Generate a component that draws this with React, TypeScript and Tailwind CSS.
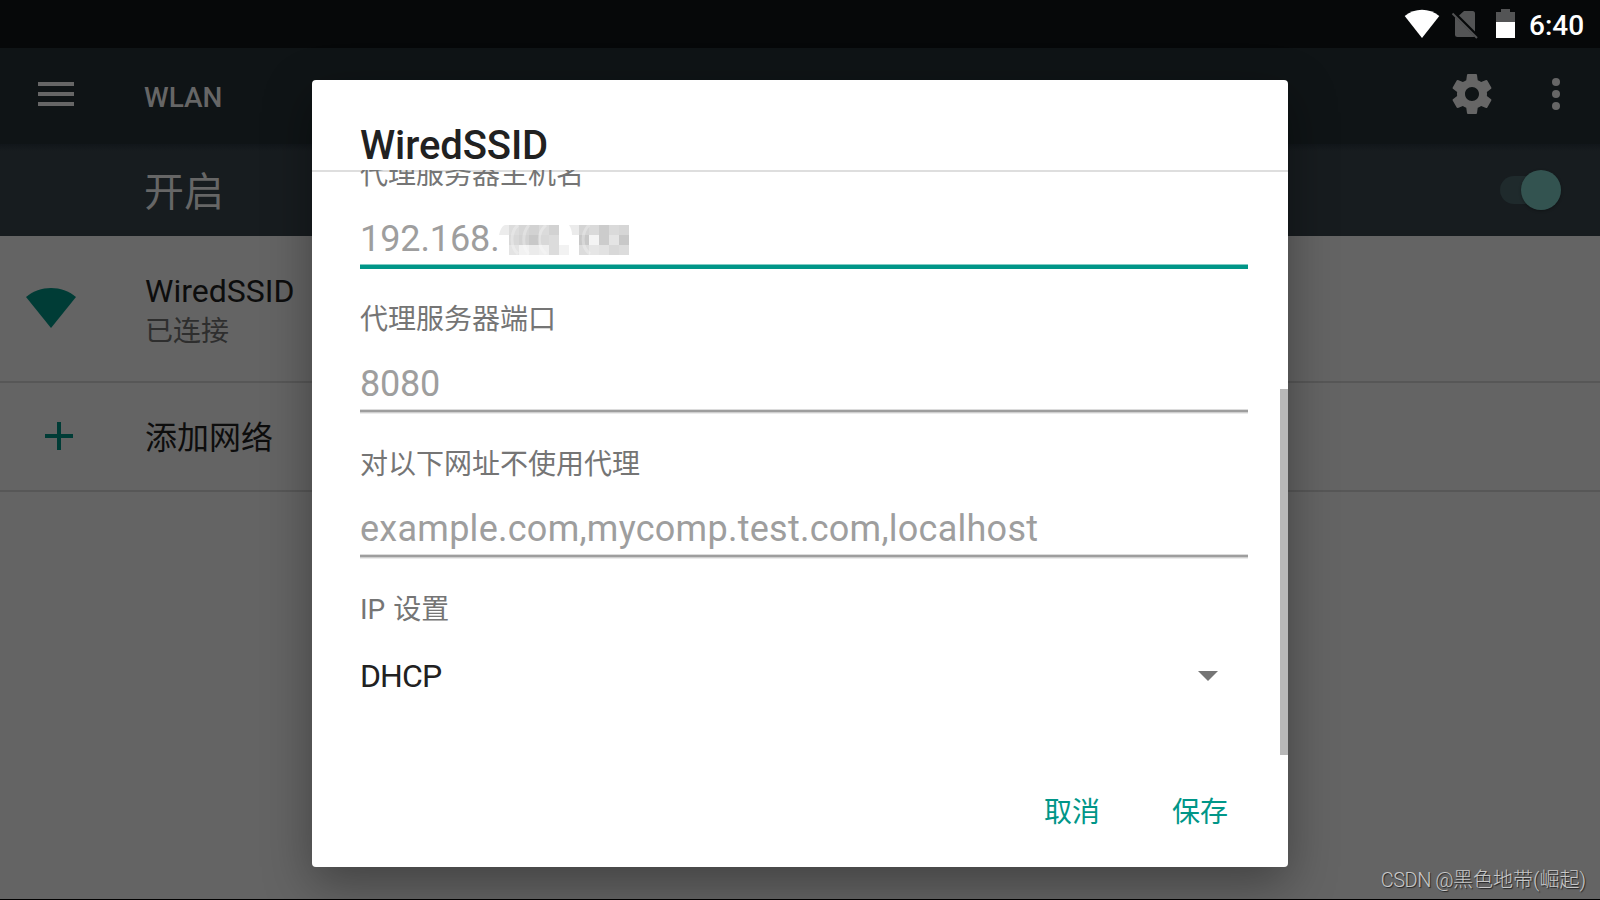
import React from "react";

const FONT = "font-[Roboto,'Noto_Sans_CJK_SC',sans-serif]";

type Cell = { x: number; y: number; c: string };

const MOSAIC_ROWS: string[][] = [
  ["#dcdcdc", "#d6d6d6", "#d2d2d2", "#dbdbdb", "#d2d2d2", "#ffffff", "#ffffff", "#d4d4d4", "#dadada", "#cccccc", "#dadada", "#d6d6d6"],
  ["#d8d8d8", "#d2d2d2", "#c8c8c8", "#d8d8d8", "#dcdcdc", "#ffffff", "#ffffff", "#c8c8c8", "#f4f4f4", "#cccccc", "#e4e4e4", "#c8c8c8"],
  ["#e4e4e4", "#f2f2f2", "#ebebeb", "#efefef", "#dcdcdc", "#f2f2f2", "#ffffff", "#dcdcdc", "#e6e6e6", "#e2e2e2", "#d8d8d8", "#dcdcdc"],
];

const MOSAIC: Cell[] = MOSAIC_ROWS.flatMap((row, r) =>
  row.map((c, i) => ({ x: 10 + i * 10, y: r * 10, c })),
);

function Mosaic() {
  return (
    <svg width="130" height="30" viewBox="0 0 130 30" className="mt-[14px]">
      {MOSAIC.map((m) => (
        <rect key={`${m.x}-${m.y}`} x={m.x} y={m.y} width="10" height="10" fill={m.c} shapeRendering="crispEdges" />
      ))}
      <path d="M0 10C1 5 3 1 6 0H10V10Z" fill="#ececec" />
      <path d="M70 0H80V10H73C73 6 72 3 70 0Z" fill="#ebebeb" />
      <g fill="none" stroke="#fff" strokeOpacity="0.28" strokeWidth="3">
        <path d="M19 0C11 7 11 22 19 29" />
        <path d="M30 0C23 8 23 22 30 29" />
        <path d="M47 0C38 8 38 21 47 29" />
        <path d="M90 0C82 8 82 22 91 29" />
      </g>
    </svg>
  );
}

function StatusBar() {
  return (
    <div className="flex h-12 shrink-0 bg-[#060809]">
      <svg width="130" height="48" viewBox="1395 0 130 48" className="ml-[1395px] shrink-0">
        <path d="M1404.700 16C1415 7.500 1429 7.500 1439.300 16L1422 38Z" fill="#fff" />
        <path d="M1464 11h8.500a2.500 2.500 0 0 1 2.500 2.500V31.500L1459 15.500Z" fill="#535455" />
        <path d="M1455 17L1474.500 36.500Q1473.500 37 1472.500 37H1457.500a2.500 2.500 0 0 1-2.500-2.500Z" fill="#535455" />
        <path d="M1452.500 13.500L1477 38" stroke="#535455" strokeWidth="2" />
        <path d="M1496 22v-10h5v-3h9v3h5v10Z" fill="#535455" />
        <path d="M1496 22h19v16h-19Z" fill="#fff" />
      </svg>
      <span className="ml-[4px] text-[28px] leading-[52px] font-medium text-white">6:40</span>
    </div>
  );
}

function AppBar() {
  return (
    <div className="flex h-24 shrink-0 bg-[#0f1416]">
      <svg width="36" height="24" viewBox="0 0 36 24" className="mt-[34px] ml-[38px]" fill="#666">
        <path d="M0 0h36v4H0zM0 10h36v4H0zM0 20h36v4H0z" />
      </svg>
      <span className="mt-[30px] ml-[70px] text-[28px] leading-[40px] font-medium text-[#666]">WLAN</span>
      <svg width="48" height="48" viewBox="0 0 24 24" className="mt-[22px] ml-auto" fill="#666">
        <path d="M19.430 12.980c.04-.32.07-.64.07-.98s-.03-.66-.07-.98l2.110-1.650c.19-.15.24-.42.12-.64l-2-3.460c-.12-.22-.39-.3-.61-.22l-2.490 1c-.52-.4-1.080-.73-1.690-.98l-.38-2.650C14.460 2.180 14.250 2 14 2h-4c-.25 0-.46.18-.49.42l-.38 2.650c-.61.25-1.170.59-1.690.98l-2.490-1c-.23-.09-.49 0-.61.22l-2 3.460c-.13.22-.07.49.12.64l2.110 1.650c-.04.32-.07.65-.07.98s.03.66.07.98l-2.110 1.650c-.19.15-.24.42-.12.64l2 3.460c.12.22.39.3.61.22l2.490-1c.52.4 1.080.73 1.690.98l.38 2.650c.03.24.24.42.49.42h4c.25 0 .46-.18.49-.42l.38-2.650c.61-.25 1.170-.59 1.690-.98l2.490 1c.23.09.49 0 .61-.22l2-3.460c.12-.22.07-.49-.12-.64l-2.110-1.650zM12 15.500c-1.930 0-3.500-1.570-3.500-3.500s1.570-3.500 3.500-3.500 3.500 1.570 3.500 3.500-1.570 3.500-3.500 3.500z" />
      </svg>
      <svg width="8" height="32" viewBox="0 0 8 32" className="mt-[30px] mr-[40px] ml-[56px]" fill="#666">
        <circle cx="4" cy="4" r="4" />
        <circle cx="4" cy="16" r="4" />
        <circle cx="4" cy="28" r="4" />
      </svg>
    </div>
  );
}

function ToggleBar() {
  return (
    <div className="flex h-[92px] shrink-0 items-center justify-between bg-[#171c1f] bg-[linear-gradient(#11161a,#171c1f_7px)] pr-[39px] pl-[144px]">
      <span className="mt-[5px] text-[40px] leading-[56px] text-[#666]">开启</span>
      <div className="flex h-7 w-[61px] items-center justify-end rounded-full bg-[#1f2a2c]">
        <div className="size-10 shrink-0 rounded-full bg-[#335350] shadow-[0_1px_3px_rgba(0,0,0,0.3)]" />
      </div>
    </div>
  );
}

function NetworkList() {
  return (
    <div className="flex grow flex-col bg-[#646464]">
      <div className="flex h-[147px] border-b-2 border-[#575757]">
        <svg width="50" height="40" viewBox="0 0 50 40" className="mt-[52px] ml-[26px]" fill="#003c36">
          <path d="M0 9C14-3 36-3 50 9L25 40Z" />
        </svg>
        <div className="mt-[35px] ml-[69px] flex flex-col">
          <span className="text-[32px] leading-[40px] text-[#0d0d0d]">WiredSSID</span>
          <span className="pt-px text-[28px] leading-[40px] text-[#2e2e2e]">已连接</span>
        </div>
      </div>
      <div className="flex h-[109px] border-b-2 border-[#575757]">
        <svg width="28" height="28" viewBox="0 0 28 28" className="mt-[39px] ml-[45px]" fill="#003c36">
          <path d="M12 0h4v12h12v4H16v12h-4V16H0v-4h12z" />
        </svg>
        <span className="mt-[35px] ml-[72px] text-[32px] leading-[40px] text-[#0d0d0d]">添加网络</span>
      </div>
    </div>
  );
}

function Label({ children }: { children: React.ReactNode }) {
  return <div className="h-[57px] pt-px text-[28px] leading-[40px] text-[#757575]">{children}</div>;
}

function GreyLine() {
  return <div className="mb-[30px] h-[5px] bg-[linear-gradient(#dcdcdc_0_1px,#9e9e9e_1px_3px,#cfcfcf_3px_4px,#ececec_4px)]" />;
}

function Dialog() {
  return (
    <div className="absolute top-[80px] left-[312px] flex h-[787px] w-[976px] flex-col overflow-hidden rounded-[4px] bg-white">
      <h1 className="h-[90px] pt-[38px] pl-12 text-[40px] leading-[56px] font-medium tracking-[-0.1px] text-[#212121]">WiredSSID</h1>
      <div className="flex h-[585px] overflow-hidden shadow-[inset_0_2px_0_#dedede]">
        <div className="mt-[-16px] ml-12 w-[888px] shrink-0">
          <Label>代理服务器主机名</Label>
          <div className="flex h-[53px] text-[36px] leading-[56px] text-[#9e9e9e]">
            <span className="w-[139px] tracking-[-0.1px]">192.168.</span>
            <Mosaic />
          </div>
          <div className="mb-[30px] h-[5px] bg-[linear-gradient(#80cbc4_0_1px,#009688_1px)]" />
          <Label>代理服务器端口</Label>
          <div className="h-[53px] text-[36px] leading-[56px] tracking-[-0.2px] text-[#9e9e9e]">8080</div>
          <GreyLine />
          <Label>对以下网址不使用代理</Label>
          <div className="h-[53px] text-[36px] leading-[56px] tracking-[0.26px] text-[#9e9e9e]">example.com,mycomp.test.com,localhost</div>
          <GreyLine />
          <Label>IP&nbsp;<span className="ml-px">设置</span></Label>
          <div className="flex items-start justify-between pt-[10px] pr-[30px]">
            <span className="text-[32px] leading-[40px] tracking-[-0.9px] text-[#212121]">DHCP</span>
            <svg width="20" height="10" viewBox="0 0 20 10" className="mt-[15px]" fill="#757575">
              <path d="M0 0h20L10 10z" />
            </svg>
          </div>
        </div>
        <div className="mt-[219px] ml-auto h-[366px] w-2 bg-[#b8b8b8]" />
      </div>
      <div className="flex justify-end gap-[72px] pt-[38px] pr-[60px] text-[28px] leading-[40px] text-[#009688]">
        <button>取消</button>
        <button>保存</button>
      </div>
    </div>
  );
}

export default function App() {
  return (
    <div className={`relative flex h-[900px] w-[1600px] flex-col overflow-hidden border-b border-black ${FONT}`}>
      <StatusBar />
      <AppBar />
      <ToggleBar />
      <NetworkList />
      <div className="absolute top-[80px] left-[312px] h-[787px] w-[976px] rounded-[4px] shadow-[0_16px_48px_rgba(0,0,0,0.35)]" />
      <Dialog />
      <div className="absolute right-[14px] bottom-[5px] text-[20px] leading-[28px] font-light text-[#c8c8c8] [text-shadow:1px_1px_1px_#222]">
        <span className="tracking-[-0.5px]">CSDN @</span>黑色地带(崛起)
      </div>
    </div>
  );
}
